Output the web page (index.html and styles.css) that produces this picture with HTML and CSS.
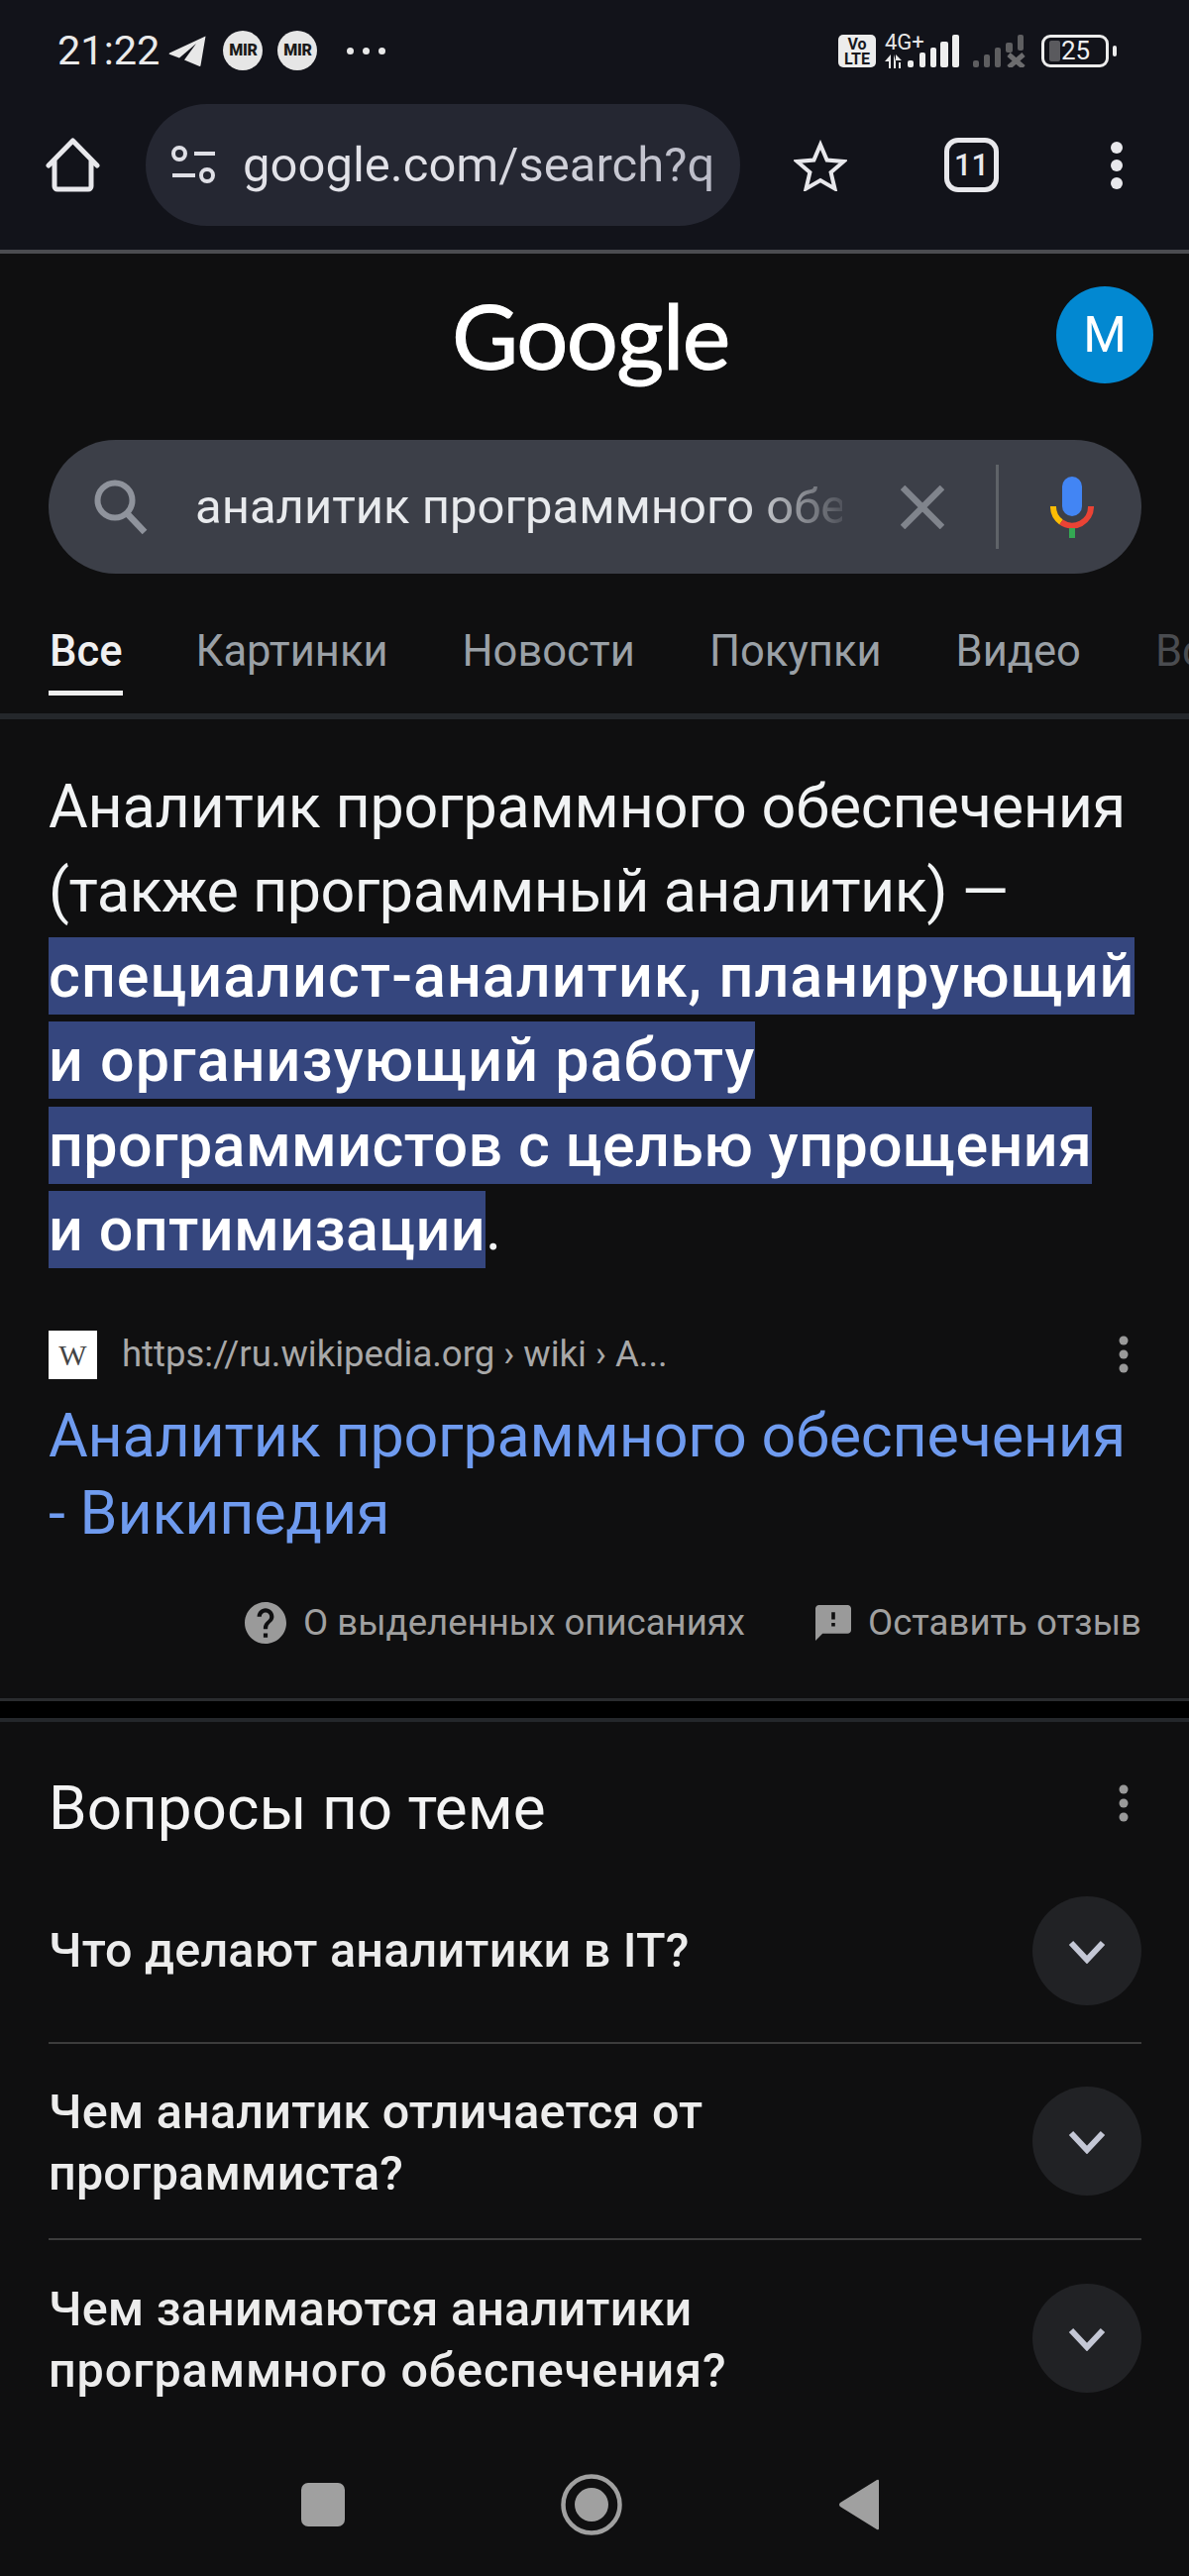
FILE: index.html
```html
<!DOCTYPE html>
<html lang="ru">
<head>
<meta charset="utf-8">
<title>аналитик программного обеспечения - Поиск</title>
<link rel="stylesheet" href="styles.css">
</head>
<body>
<div class="chrome">
  <div class="status">
    <span class="time">21:22</span>
    <svg class="plane" width="38" height="31" viewBox="0 0 38 31"><path d="M37.500.5 1 17.500q-1 .8 0 1.200L11 22.500 28 8 16 24.500 31.500 31q1 0 1-1z" fill="#e8e8e8"/></svg>
    <span class="mir">MIR</span>
    <span class="mir">MIR</span>
    <span class="more"><i></i><i></i><i></i></span>
    <div class="status-right">
      <span class="volte">Vo<br>LTE</span>
      <div class="net">
        <span class="net-label">4G+</span>
        <svg width="20" height="14" viewBox="0 0 20 14"><path d="M6 0v14H4V7H0zM9 0v14h2V7h0z M11 0l6 6h-6zM14 8h2v6h-2z" fill="#e8e8e8"/></svg>
      </div>
      <svg class="sig" width="54" height="34" viewBox="0 0 54 34"><rect x="1" y="27" width="6" height="7" rx="2" fill="#eee"/><rect x="13" y="19" width="6" height="15" rx="2" fill="#eee"/><rect x="24" y="14" width="6" height="20" rx="2" fill="#eee"/><rect x="34" y="8" width="8" height="26" rx="2" fill="#eee"/><rect x="46" y="1" width="7" height="33" rx="2" fill="#eee"/></svg>
      <svg class="sig2" width="54" height="34" viewBox="0 0 54 34"><rect x="1" y="27" width="6" height="7" rx="2" fill="#5e5e60"/><rect x="12" y="21" width="6" height="13" rx="2" fill="#5e5e60"/><rect x="23" y="14" width="6" height="20" rx="2" fill="#5e5e60"/><rect x="34" y="9" width="7" height="10" rx="2" fill="#5e5e60"/><rect x="46" y="1" width="6" height="16" rx="2" fill="#5e5e60"/><path d="M37 21 52 34M52 21 37 34" stroke="#6c6c6e" stroke-width="5"/></svg>
      <div class="battery"><span class="batt-body"><i class="batt-fill"></i><span class="batt-num">25</span></span><i class="batt-nub"></i></div>
    </div>
  </div>
  <div class="toolbar">
    <svg class="home" width="56" height="56" viewBox="0 0 56 56"><path d="M3 28 27.500 3 52 28M9 23v26a3 3 0 0 0 3 3h31a3 3 0 0 0 3-3V23" fill="none" stroke="#e8e8ec" stroke-width="5" stroke-linecap="round" stroke-linejoin="round"/></svg>
    <div class="omni">
      <svg class="tune" width="46" height="40" viewBox="0 0 46 40"><circle cx="9" cy="8" r="6" fill="none" stroke="#dfdfe6" stroke-width="4"/><path d="M24 8h21M2 30h23" stroke="#dfdfe6" stroke-width="4"/><circle cx="37" cy="30" r="6" fill="none" stroke="#dfdfe6" stroke-width="4"/></svg>
      <span class="url">google.com/search?q</span>
    </div>
    <svg class="star" width="54" height="52" viewBox="0 0 54 52"><path d="M27 5l6.600 15.500 16.900 1.400-12.900 11 3.900 16.500L27 41l-14.500 8.400 3.900-16.500-12.900-11 16.900-1.400z" fill="none" stroke="#e8e8ec" stroke-width="4"/></svg>
    <span class="tabs-count">11</span>
    <svg class="menu-dots" width="14" height="50" viewBox="0 0 14 50"><circle cx="7" cy="7" r="6"/><circle cx="7" cy="25" r="6"/><circle cx="7" cy="43" r="6"/></svg>
  </div>
</div>

<div class="page">
  <header class="logo-row">
    <span class="logo">Google</span>
    <span class="avatar">M</span>
  </header>

  <div class="search">
    <svg class="s-icon" width="54" height="56" viewBox="0 0 54 56"><circle cx="21" cy="21" r="17.500" fill="none" stroke="#8f939c" stroke-width="6"/><path d="M33 34 51 53" stroke="#8f939c" stroke-width="6.500"/></svg>
    <span class="query">аналитик программного обеспечения</span>
    <svg class="clear" width="44" height="44" viewBox="0 0 44 44"><path d="M2 2 42 42M42 2 2 42" stroke="#80848c" stroke-width="6.500"/></svg>
    <i class="s-div"></i>
    <svg class="mic" width="44" height="64" viewBox="0 0 44 64"><rect x="12" y="1" width="20" height="40" rx="10" fill="#4285f4"/><path d="M3 31a19 19 0 0 0 8 16" fill="none" stroke="#fbbc04" stroke-width="6"/><path d="M11 47a19 19 0 0 0 30-16" fill="none" stroke="#ea4335" stroke-width="6"/><rect x="19" y="53" width="6" height="10" fill="#34a853"/></svg>
  </div>

  <nav class="tabs">
    <span class="tab tab-active">Все</span>
    <span class="tab">Картинки</span>
    <span class="tab">Новости</span>
    <span class="tab">Покупки</span>
    <span class="tab">Видео</span>
    <span class="tab tab-faded">Все</span>
  </nav>

  <section class="snippet">
    <p class="answer">Аналитик программного обеспечения <span class="tight">(также программный аналитик) —</span> <mark class="hl"><span class="wide">специалист-аналитик, планирующий и организующий работу</span> программистов с целью упрощения и оптимизации</mark>.</p>
    <div class="source">
      <span class="favicon">W</span>
      <span class="cite">https://ru.wikipedia.org › wiki › А...</span>
      <svg class="dots-sm" width="12" height="38" viewBox="0 0 12 38"><circle cx="6" cy="5" r="4.500"/><circle cx="6" cy="19" r="4.500"/><circle cx="6" cy="33" r="4.500"/></svg>
    </div>
    <a class="title">Аналитик программного обеспечения - Википедия</a>
    <div class="about">
      <svg class="about-icon" width="42" height="42" viewBox="2 2 20 20"><path fill="#9a9a9a" d="M12 2C6.480 2 2 6.480 2 12s4.480 10 10 10 10-4.480 10-10S17.520 2 12 2zm1 17h-2v-2h2v2zm2.070-7.750l-.9.920C13.450 12.900 13 13.500 13 15h-2v-.5c0-1.100.45-2.100 1.170-2.830l1.240-1.260c.37-.36.59-.86.59-1.410 0-1.100-.9-2-2-2s-2 .9-2 2H8c0-2.210 1.790-4 4-4s4 1.790 4 4c0 .88-.36 1.680-.93 2.250z"/></svg>
      <span class="about-text">О выделенных описаниях</span>
      <svg class="fb-icon" width="36" height="36" viewBox="2 2 20 20"><path fill="#9a9a9a" d="M20 2H4c-1.100 0-2 .9-2 2v18l4-4h14c1.100 0 2-.9 2-2V4c0-1.100-.9-2-2-2zm-7 12h-2v-2h2v2zm0-4h-2V6h2v4z"/></svg>
      <span class="about-text">Оставить отзыв</span>
    </div>
  </section>

  <div class="band"></div>

  <section class="paa">
    <div class="paa-head">
      <h2 class="paa-title">Вопросы по теме</h2>
      <svg class="dots-sm dots-head" width="12" height="38" viewBox="0 0 12 38"><circle cx="6" cy="5" r="4.500"/><circle cx="6" cy="19" r="4.500"/><circle cx="6" cy="33" r="4.500"/></svg>
    </div>
    <div class="q q-one">
      <span class="q-text">Что делают аналитики в IT?</span>
      <span class="chev"><svg width="38" height="24" viewBox="0 0 38 24"><path d="M3 3 19 20 35 3" fill="none" stroke="#c4c7d5" stroke-width="6"/></svg></span>
    </div>
    <div class="q">
      <span class="q-text q-two">Чем аналитик отличается от<br>программиста?</span>
      <span class="chev"><svg width="38" height="24" viewBox="0 0 38 24"><path d="M3 3 19 20 35 3" fill="none" stroke="#c4c7d5" stroke-width="6"/></svg></span>
    </div>
    <div class="q q-last">
      <span class="q-text q-two">Чем занимаются аналитики<br><span class="q-wide">программного обеспечения?</span></span>
      <span class="chev"><svg width="38" height="24" viewBox="0 0 38 24"><path d="M3 3 19 20 35 3" fill="none" stroke="#c4c7d5" stroke-width="6"/></svg></span>
    </div>
  </section>

  <div class="navbar">
    <i class="nav-square"></i>
    <svg width="62" height="62" viewBox="0 0 62 62"><circle cx="31" cy="31" r="28.500" fill="none" stroke="#a0a0a0" stroke-width="4.500"/><circle cx="31" cy="31" r="17" fill="#a0a0a0"/></svg>
    <svg width="42" height="52" viewBox="0 0 42 52"><path d="M39 1 2 24q-2 2 0 4l37 23q2 1 2-1V2q0-2-2-1z" fill="#a0a0a0"/></svg>
  </div>
</div>
</body>
</html>
```

FILE: styles.css
```css
* { box-sizing: border-box; }
html, body { margin: 0; padding: 0; }
body {
  width: 1200px;
  height: 2600px;
  overflow: hidden;
  background: #0f0f10;
  color: #e8eaed;
  font-family: Roboto, "Noto Sans", sans-serif;
}
i { display: block; font-style: normal; }

/* browser chrome */
.chrome { height: 256px; background: #12131a; border-bottom: 4px solid #4b4c50; }
.status { height: 102px; display: flex; align-items: center; padding: 0 73px 0 58px; }
.time { font-size: 41.500px; line-height: 48px; color: #eaeaea; }
.plane { margin-left: 9px; }
.mir {
  width: 40px; height: 40px; border-radius: 50%;
  margin-left: 17px;
  background: #e6e6e6; color: #1a1a1a;
  font-size: 16px; font-weight: 900; line-height: 40px; text-align: center;
  letter-spacing: -.3px;
}
.mir + .mir { margin-left: 15px; }
.more { display: flex; gap: 9px; margin-left: 30px; }
.more i { width: 7px; height: 7px; border-radius: 50%; background: #e8e8e8; }
.status-right { display: flex; align-items: center; margin-left: auto; }
.volte {
  width: 38px; height: 33px; border-radius: 5px;
  background: #ececec; color: #17181e;
  font-size: 16px; font-weight: 700; line-height: 15px; text-align: center; padding-top: 2px;
}
.net { width: 39px; margin-left: 9px; display: flex; flex-direction: column; height: 36px; }
.net-label { font-size: 22px; line-height: 20px; color: #e8e8e8; white-space: nowrap; }
.net svg { margin-top: 2px; }
.sig { margin-left: -17px; }
.sig2 { margin-left: 12px; }
.battery { display: flex; align-items: center; margin-left: 16px; gap: 4px; }
.batt-body {
  width: 68px; height: 33px; border: 3px solid #ececec; border-radius: 9px;
  display: flex; align-items: center; padding: 0 5px;
}
.batt-fill { width: 11px; height: 21px; background: #5a5a5e; border-radius: 2px; flex: none; }
.batt-num { font-size: 26px; line-height: 27px; color: #f0f0f0; margin-left: 1px; }
.batt-nub { width: 4px; height: 11px; border-radius: 2px; background: #ececec; }

.toolbar { display: flex; align-items: center; padding: 3px 0 0 46px; height: 126px; }
.omni {
  width: 600px; height: 123px; border-radius: 62px;
  margin-left: 45px;
  background: #252732;
  display: flex; align-items: center; padding-left: 25px;
}
.url {
  margin-left: 27px;
  font-size: 49px; line-height: 56px;
  background: linear-gradient(90deg, #e2e2e8 40%, #b9bac6 100%);
  -webkit-background-clip: text; background-clip: text; color: transparent;
}
.star { margin-left: 54px; }
.tabs-count {
  width: 55px; height: 55px; margin-left: 98px;
  border: 5px solid #e8e8ec; border-radius: 14px;
  font-size: 31px; font-weight: 500; line-height: 45px; text-align: center; color: #e8e8ec;
}
.menu-dots { margin-left: 112px; fill: #e8e8ec; }

/* google page */
.logo-row {
  display: grid; grid-template-columns: 1fr auto 1fr; align-items: center;
  padding: 33px 36px 0 0; height: 131px;
}
.logo {
  grid-column: 2;
  font-family: Lato, Roboto, sans-serif;
  font-size: 92px; line-height: 98px; color: #fff;
  letter-spacing: -1.500px;
  -webkit-text-stroke: 1px #fff;
  margin-left: 28px;
}
.avatar {
  grid-column: 3; justify-self: end;
  width: 98px; height: 98px; border-radius: 50%;
  background: #0288d1; color: #fff;
  font-size: 50px; line-height: 98px; text-align: center;
}

.search {
  margin: 57px 48px 0 49px; height: 135px; border-radius: 68px;
  background: #3c3f48;
  display: flex; align-items: center; padding-left: 46px;
}
.query {
  width: 653px; margin-left: 48px; overflow: hidden; white-space: nowrap;
  font-size: 49px; line-height: 60px; color: #e8eaed;
  -webkit-mask-image: linear-gradient(90deg, #000 84%, rgba(0,0,0,.12) 100%);
  mask-image: linear-gradient(90deg, #000 84%, rgba(0,0,0,.12) 100%);
}
.clear { margin-left: 59px; }
.s-div { width: 3px; height: 85px; margin-left: 52px; background: #5f6368; }
.mic { margin-left: 52px; }

.tabs {
  height: 147px; padding: 55px 0 0 49px;
  display: flex; gap: 71px; overflow: hidden; white-space: nowrap;
  border-bottom: 6px solid #24272b;
}
.tab { height: 68px; padding: 0 2px; font-size: 43.500px; line-height: 48px; color: #9aa0a6; }
.tab-active { color: #f0f0f0; font-weight: 500; border-bottom: 5px solid #eeeeee; padding: 0 1px; }
.tab-faded { color: #4a4c50; }

.snippet { padding: 46px 48px 0 49px; height: 991px; border-bottom: 3px solid #2a2c2f; }
.answer { margin: 0; font-size: 61px; line-height: 85.300px; letter-spacing: -.2px; color: #f1f3f4; }
.tight { letter-spacing: -.5px; }
.hl {
  background: #35467e; color: #fff; font-weight: 500; letter-spacing: .4px;
  padding: 2.500px 0 3.500px;
  -webkit-box-decoration-break: clone; box-decoration-break: clone;
}
.wide { letter-spacing: 1.050px; }
.source { display: flex; align-items: center; margin-top: 59px; height: 49px; }
.favicon {
  width: 49px; height: 49px; background: #fff; color: #444;
  font-family: "Liberation Serif", serif; font-size: 30px; line-height: 49px; text-align: center;
}
.cite { margin-left: 25px; font-size: 36.500px; line-height: 44px; color: #a8a8a8; white-space: nowrap; }
.dots-sm { margin-left: auto; fill: #9a9a9a; margin-right: 12px; }
.title { display: block; margin-top: 18px; font-size: 61px; letter-spacing: -.2px; line-height: 78px; color: #6f9bef; }
.about { display: flex; align-items: center; justify-content: flex-end; margin-top: 50px; }
.about-text { margin-left: 17px; font-size: 36.600px; line-height: 44px; color: #a0a0a0; }
.fb-icon { margin-left: 71px; }

.band { height: 17px; background: #000; }

.paa { border-top: 4px solid #24272b; padding: 0 48px 0 49px; height: 764px; }
.paa-head { display: flex; align-items: flex-start; height: 139px; padding-top: 52px; }
.paa-title { margin: 0; font-size: 62px; font-weight: 400; line-height: 70px; color: #f4f4f4; }
.dots-head { margin-top: 11px; }
.q {
  display: flex; align-items: center; justify-content: space-between;
  height: 198px; border-bottom: 2px solid #3c3c3c;
}
.q-one { height: 186px; }
.q-last { border-bottom: 0; }
.q-text { font-size: 48.500px; font-weight: 500; line-height: 62px; letter-spacing: .2px; color: #ececec; }
.q-two { padding-top: 4px; }
.q-wide { letter-spacing: .9px; }
.chev {
  width: 110px; height: 110px; border-radius: 50%;
  background: #212225;
  display: flex; align-items: center; justify-content: center;
}
.chev svg { display: block; margin-top: 2px; }

.navbar {
  display: flex; align-items: center; justify-content: center; gap: 218px;
  height: 60px;
  padding-right: 8px;
}
.nav-square { width: 44px; height: 44px; border-radius: 7px; background: #a0a0a0; }
```
